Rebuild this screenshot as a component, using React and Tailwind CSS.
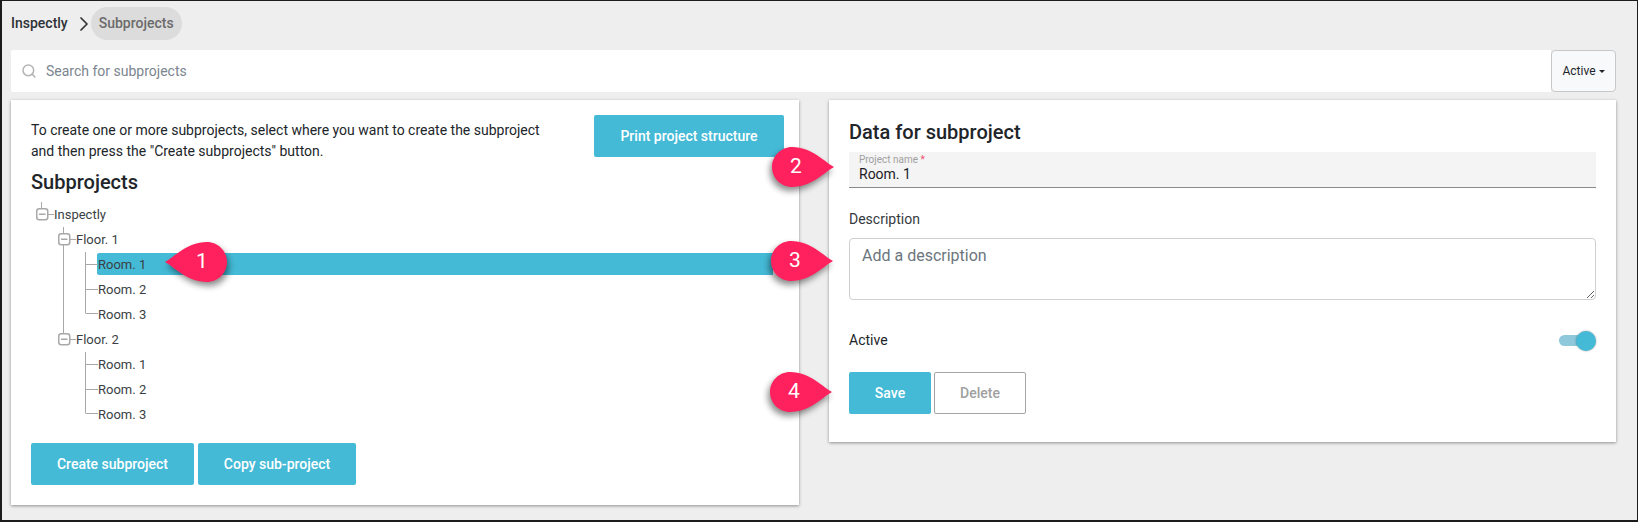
import { ChevronRight, Search } from 'lucide-react'

const ROOMS = ['Room. 1', 'Room. 2', 'Room. 3']

function Marker({ label, className }) {
  return (
    <div className={`absolute h-[40px] w-[62px] ${className}`}>
      <svg width="62" height="40" viewBox="0 0 62 40" className="absolute inset-0 overflow-visible drop-shadow-[-2px_4px_3px_rgba(0,0,0,0.45)]">
        <path d="M62 20 C54 16 40 0 20 0 C9 0 0 9 0 20 C0 31 9 40 20 40 C40 40 54 24 62 20 Z" fill="#ff215e" />
      </svg>
      <span className="absolute top-0 left-0 flex h-[40px] w-[40px] items-center justify-center pl-[8px] text-[21px] text-white">{label}</span>
    </div>
  )
}

function FlippedMarker({ label, className }) {
  return (
    <div className={`absolute h-[40px] w-[62px] ${className}`}>
      <svg width="62" height="40" viewBox="0 0 62 40" className="absolute inset-0 overflow-visible drop-shadow-[2px_4px_3px_rgba(0,0,0,0.45)]">
        <path d="M0 20 C8 16 22 0 42 0 C53 0 62 9 62 20 C62 31 53 40 42 40 C22 40 8 24 0 20 Z" fill="#ff215e" />
      </svg>
      <span className="absolute top-0 right-0 flex h-[40px] w-[40px] items-center justify-center pr-[10px] text-[21px] text-white">{label}</span>
    </div>
  )
}

function TreeLines() {
  const stroke = '#a8a8a8'
  const boxes = [[36, 208], [58, 233], [58, 333]]
  const lines = [
    'M41.5 202V208', 'M48 214.5H54',
    'M63.5 227V233', 'M63.5 245V333', 'M70 239.5H76', 'M70 339.5H76',
    'M85.5 252V313.5', 'M86 264.5H98', 'M86 289.5H98', 'M86 313.5H98',
    'M85.5 352V413.5', 'M86 364.5H98', 'M86 389.5H98', 'M86 413.5H98',
  ]

  return (
    <svg className="pointer-events-none absolute top-[-1px] left-[-2px] h-[522px] w-[120px]" viewBox="0 0 120 522" fill="none">
      {lines.map((d) => <path key={d} d={d} stroke={stroke} />)}
      {boxes.map(([x, y]) => (
        <g key={y}>
          <rect x={x + 0.75} y={y + 0.75} width="11" height="11" rx="2.5" stroke={stroke} strokeWidth="1.5" fill="#fff" />
          <path d={`M${x + 3} ${y + 6.25}H${x + 9.5}`} stroke={stroke} strokeWidth="1.5" />
        </g>
      ))}
    </svg>
  )
}

function TreeRow({ children, indent, selected }) {
  return (
    <div className={`flex h-[25px] items-center text-[13px] text-[#3a3f45] ${indent}`}>
      {selected ? (
        <div className="mb-[2px] flex h-[22px] flex-1 items-center rounded-l-[2px] bg-[#45bad6] pt-[2px] pl-[1px]">{children}</div>
      ) : children}
    </div>
  )
}

function FloorRooms({ first }) {
  return ROOMS.map((room, index) => {
    const selected = first && index === 0
    return (
      <TreeRow key={room} indent={selected ? 'pl-[86px]' : 'pl-[87px]'} selected={selected}>{room}</TreeRow>
    )
  })
}

function PrimaryButton({ children, className }) {
  return (
    <button type="button" className={`h-[42px] rounded-[2px] bg-[#45bad6] text-[14px] font-medium text-white ${className}`}>
      {children}
    </button>
  )
}

export default function App() {
  return (
    <div className="relative h-[522px] w-full overflow-hidden border-2 border-t-[1px] border-r-[1px] border-[#1c1c1c] bg-[#eeeeee] font-['Roboto',sans-serif] text-[#212529]">
      <nav className="flex h-[49px] items-center pb-[4px] pl-[9px] text-[14px] font-medium">
        <span className="text-[#2f3237]">Inspectly</span>
        <ChevronRight size={24} strokeWidth={1.75} className="mr-[-5px] ml-[4px] text-[#333]" />
        <span className="flex h-[33px] items-center rounded-full bg-[#dcdcdc] px-[8px] text-[#6b6b6b]">Subprojects</span>
      </nav>

      <div className="flex h-[42px] pr-[21px] pl-[9px]">
        <div className="flex flex-1 items-center rounded-l-[2px] bg-white pl-[10px]">
          <Search size={16} strokeWidth={2.25} className="text-[#b4b4b4]" />
          <span className="ml-[9px] text-[14px] text-[#7b8590]">Search for subprojects</span>
        </div>
        <button type="button" className="flex w-[65px] items-center justify-center gap-[3px] rounded-[4px] border border-[#c8c8c8] bg-[#f8f9fa] text-[12px] text-[#212529]">
          Active
          <span className="mt-[1px] h-0 w-0 border-x-[3px] border-t-[3px] border-x-transparent border-t-[#212529]" />
        </button>
      </div>

      <div className="mt-[8px] flex items-start gap-[30px] pr-[21px] pl-[9px]">
        <section className="relative h-[405px] w-[788px] bg-white shadow-[0_1px_3px_rgba(0,0,0,0.4)]">
          <div className="flex pt-[15px] pr-[15px] pl-[20px]">
            <p className="w-[515px] pt-[5px] text-[14px] leading-[21px]">
              To create one or more subprojects, select where you want to create the subproject
              and then press the "Create subprojects" button.
            </p>
            <PrimaryButton className="ml-auto w-[190px]">Print project structure</PrimaryButton>
          </div>
          <h2 className="mt-[8px] pl-[20px] text-[20px] leading-[24px] font-medium">Subprojects</h2>
          <div className="mt-[8px] pr-[26px]">
            <TreeRow indent="pl-[43px]">Inspectly</TreeRow>
            <TreeRow indent="pl-[65px]">Floor. 1</TreeRow>
            <FloorRooms first />
            <TreeRow indent="pl-[65px]">Floor. 2</TreeRow>
            <FloorRooms />
          </div>
          <div className="mt-[16px] flex gap-[4px] pl-[20px]">
            <PrimaryButton className="w-[163px]">Create subproject</PrimaryButton>
            <PrimaryButton className="w-[158px]">Copy sub-project</PrimaryButton>
          </div>
        </section>

        <section className="h-[342px] flex-1 bg-white px-[20px] pt-[20px] shadow-[0_1px_3px_rgba(0,0,0,0.4)]">
          <h2 className="text-[20px] leading-[24px] font-medium">Data for subproject</h2>
          <div className="mt-[8px] h-[36px] border-b border-[#8a8a8a] bg-[#f4f4f4] pl-[10px]">
            <div className="pt-[2px] text-[10px] leading-[12px] text-[#a0a0a0]">Project name <span className="text-[#f0506e]">*</span></div>
            <div className="text-[14px] leading-[17px] text-[#1c2024]">Room. 1</div>
          </div>
          <div className="mt-[21px] text-[14px] leading-[20px] text-[#343a40]">Description</div>
          <textarea
            readOnly
            placeholder="Add a description"
            className="mt-[9px] block h-[62px] w-full rounded-[4px] border border-[#cfcfd4] px-[12px] py-[6px] text-[16px] leading-[22px] placeholder:text-[#6c757d]"
          />
          <div className="mt-[30px] flex items-center justify-between">
            <span className="text-[14px] text-[#212529]">Active</span>
            <span className="relative block h-[20px] w-[37px]">
              <span className="absolute top-[4px] left-0 h-[11px] w-[30px] rounded-full bg-[#8ec8da]" />
              <span className="absolute top-0 right-0 h-[20px] w-[20px] rounded-full bg-[#45bad6] shadow-[0_0_2px_rgba(0,0,0,0.4)]" />
            </span>
          </div>
          <div className="mt-[21px] flex gap-[3px]">
            <PrimaryButton className="w-[82px]">Save</PrimaryButton>
            <button type="button" className="h-[42px] w-[92px] rounded-[2px] border border-[#a5a5a5] bg-white text-[14px] font-medium text-[#a0a0a0]">Delete</button>
          </div>
        </section>
      </div>

      <TreeLines />
      <FlippedMarker label="1" className="top-[241px] left-[163px]" />
      <Marker label="2" className="top-[146px] left-[770px]" />
      <Marker label="3" className="top-[240px] left-[769px]" />
      <Marker label="4" className="top-[371px] left-[768px]" />
    </div>
  )
}
